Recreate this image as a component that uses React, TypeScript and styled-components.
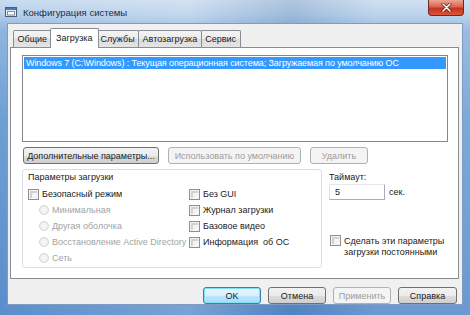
import React from "react";
import styled, { createGlobalStyle, css } from "styled-components";

const GlobalStyle = createGlobalStyle`
  html, body {
    margin: 0;
    padding: 0;
  }
  body {
    width: 470px;
    height: 315px;
    overflow: hidden;
    font-family: "Liberation Sans", Arial, sans-serif;
    font-size: 9px;
    color: #1a1a1a;
  }
`;

const Frame = styled.div`
  width: 470px;
  height: 315px;
  box-sizing: border-box;
  display: flex;
  flex-direction: column;
  background:
    linear-gradient(90deg, rgba(255, 255, 255, 0) 0%, rgba(255, 255, 255, 0.18) 40%, rgba(30, 70, 130, 0.15) 62%, rgba(255, 255, 255, 0.1) 80%),
    linear-gradient(180deg, #c9dcef 0px, #b6cfea 14px, #8fb5de 30px, #6e9fd3 120px, #5a8ecb 100%);
`;

const TitleBar = styled.div`
  height: 23px;
  display: flex;
  align-items: flex-start;
  padding-left: 5px;
  flex-shrink: 0;
`;

const Title = styled.div`
  display: flex;
  align-items: center;
  gap: 6px;
  height: 20px;
  margin-top: 2px;
  font-size: 9.5px;
  color: #1b2f4b;
`;

const CloseButton = styled.div`
  margin-left: auto;
  margin-right: 6px;
  width: 36px;
  height: 16px;
  box-sizing: border-box;
  border: 1px solid #6d2a22;
  border-top: none;
  border-radius: 0 0 4px 4px;
  background: linear-gradient(180deg, #eba595 0%, #d8654f 45%, #c5321a 55%, #d9553a 100%);
  display: flex;
  align-items: center;
  justify-content: center;
`;

const Client = styled.div`
  flex: 1;
  min-height: 0;
  margin: 0 7px 10px 7px;
  background: #f0f0f0;
  border: 1px solid #7f9bbd;
  box-sizing: border-box;
  display: flex;
  flex-direction: column;
  padding: 4px 3px 0 2px;
`;

const TabStrip = styled.div`
  display: flex;
  align-items: flex-end;
  height: 19px;
  padding-left: 4px;
  position: relative;
  z-index: 1;
  flex-shrink: 0;
`;

const Tab = styled.div<{ $active?: boolean }>`
  height: 17px;
  box-sizing: border-box;
  padding: 0 3.5px;
  margin-left: -1px;
  border: 1px solid #898c95;
  border-bottom: none;
  border-radius: 2px 2px 0 0;
  background: linear-gradient(180deg, #f4f4f4 0%, #ebebeb 50%, #dcdcdc 51%, #e4e4e4 100%);
  display: flex;
  align-items: center;
  white-space: nowrap;
  ${(p) =>
    p.$active &&
    css`
      height: 20px;
      margin: 0 -2px -1px -2px;
      padding: 0 5.5px 2px 5.5px;
      background: #fff;
      position: relative;
      z-index: 2;
    `}
`;

const Panel = styled.div`
  flex: 1;
  min-height: 0;
  border: 1px solid #898c95;
  background: #fff;
  padding: 7px 10px 10px 11px;
  display: flex;
  flex-direction: column;
`;

const ListBox = styled.div`
  height: 87px;
  flex-shrink: 0;
  box-sizing: border-box;
  border: 1px solid #828790;
  padding: 1px;
`;

const ListRow = styled.div<{ $selected?: boolean }>`
  height: 12px;
  line-height: 12px;
  padding-left: 2px;
  white-space: nowrap;
  overflow: hidden;
  letter-spacing: -0.1px;
  ${(p) =>
    p.$selected &&
    css`
      background: #3399ff;
      color: #fff;
    `}
`;

const ButtonRow = styled.div`
  display: flex;
  gap: 9px;
  margin-top: 5px;
  padding-left: 1px;
`;

const Button = styled.div<{ $w: number; $disabled?: boolean; $default?: boolean }>`
  width: ${(p) => p.$w}px;
  height: 17px;
  box-sizing: border-box;
  border: 1px solid #707070;
  border-radius: 3px;
  background: linear-gradient(180deg, #f2f2f2 0%, #ebebeb 50%, #dddddd 51%, #cfcfcf 100%);
  display: flex;
  align-items: center;
  justify-content: center;
  white-space: nowrap;
  color: #1a1a1a;
  ${(p) =>
    p.$disabled &&
    css`
      border-color: #adb2b5;
      background: #f4f4f4;
      color: #9d9d9d;
    `}
  ${(p) =>
    p.$default &&
    css`
      border-color: #3c7fb1;
      box-shadow: inset 0 0 0 1px #7fe0f8;
      background: linear-gradient(180deg, #eaf6fd 0%, #d9f0fc 50%, #bee6fd 51%, #a7d9f5 100%);
    `}
`;

const Lower = styled.div`
  display: flex;
  margin-top: 5px;
`;

const GroupBox = styled.div`
  width: 300px;
  height: 99px;
  flex-shrink: 0;
  box-sizing: border-box;
  border: 1px solid #d5dfe5;
  border-radius: 3px;
  padding: 0 5px;
`;

const GroupLabel = styled.div`
  height: 15px;
  line-height: 15px;
`;

const OptionsGrid = styled.div`
  display: grid;
  grid-template-columns: 161px 1fr;
  grid-template-rows: repeat(5, 16px);
  grid-auto-flow: column;
  margin-top: 1px;
`;

const Option = styled.div<{ $indent?: boolean; $disabled?: boolean }>`
  display: flex;
  align-items: center;
  gap: 3px;
  white-space: nowrap;
  padding-left: ${(p) => (p.$indent ? 11 : 0)}px;
  color: ${(p) => (p.$disabled ? "#a3a3a3" : "#1a1a1a")};
`;

const CheckBox = styled.span`
  width: 11px;
  height: 11px;
  box-sizing: border-box;
  border: 1px solid #8e8f8f;
  background: #f4f4f4;
  box-shadow: inset 0 0 0 1px #f4f4f4, inset 1px 1px 0 2px #d2d2d2;
  flex-shrink: 0;
`;

const Radio = styled.span`
  width: 10px;
  height: 10px;
  box-sizing: border-box;
  border-radius: 50%;
  border: 1px solid #d6d6d6;
  background: radial-gradient(circle at 50% 50%, #fbfbfb 0%, #e6e6e6 100%);
  flex-shrink: 0;
`;

const SideColumn = styled.div`
  flex: 1;
  margin-left: 7px;
  display: flex;
  flex-direction: column;
`;

const SideLabel = styled.div`
  height: 14px;
  line-height: 14px;
  margin-top: 1px;
`;

const TimeoutRow = styled.div`
  display: flex;
  align-items: center;
  gap: 4px;
`;

const TextInput = styled.div`
  width: 56px;
  height: 16px;
  box-sizing: border-box;
  border: 1px solid #abadb3;
  border-top-color: #e3e9ef;
  border-left-color: #e2e3ea;
  background: #fff;
  padding-left: 5px;
  line-height: 14px;
`;

const PermanentRow = styled.div`
  display: flex;
  align-items: flex-start;
  gap: 3px;
  margin-top: 35px;
  margin-left: 1px;
`;

const PermanentText = styled.div`
  line-height: 11px;
  margin-top: 1px;
  white-space: nowrap;
  color: #1a1a1a;
`;

const Footer = styled.div`
  display: flex;
  justify-content: flex-end;
  gap: 7px;
  padding: 8px 2px 0 0;
  height: 25px;
  box-sizing: border-box;
  flex-shrink: 0;
`;

const AppIcon = () => (
  <svg width="12" height="12" viewBox="0 0 12 12">
    <rect x="0.5" y="1.5" width="11" height="9" fill="#e8eef6" stroke="#4b5d78" />
    <rect x="1" y="2" width="10" height="2" fill="#4a78b8" />
    <rect x="2.5" y="5.5" width="7" height="3.5" fill="#ffffff" stroke="#7d8ea6" />
  </svg>
);

const CloseIcon = () => (
  <svg width="11" height="9" viewBox="0 0 11 9">
    <path d="M2 1 L9 8 M9 1 L2 8" stroke="#5a1a14" strokeWidth="3" strokeLinecap="round" />
    <path d="M2 1 L9 8 M9 1 L2 8" stroke="#ffffff" strokeWidth="1.6" strokeLinecap="round" />
  </svg>
);

const tabs = ["Общие", "Загрузка", "Службы", "Автозагрузка", "Сервис"];

export default function App() {
  return (
    <>
      <GlobalStyle />
      <Frame>
        <TitleBar>
          <Title>
            <AppIcon />
            Конфигурация системы
          </Title>
          <CloseButton>
            <CloseIcon />
          </CloseButton>
        </TitleBar>
        <Client>
          <TabStrip>
            {tabs.map((t) => (
              <Tab key={t} $active={t === "Загрузка"}>
                {t}
              </Tab>
            ))}
          </TabStrip>
          <Panel>
            <ListBox>
              <ListRow $selected>
                Windows 7 (C:\Windows) : Текущая операционная система; Загружаемая по умолчанию ОС
              </ListRow>
            </ListBox>
            <ButtonRow>
              <Button $w={136}>Дополнительные параметры...</Button>
              <Button $w={133} $disabled>
                Использовать по умолчанию
              </Button>
              <Button $w={58} $disabled>
                Удалить
              </Button>
            </ButtonRow>
            <Lower>
              <GroupBox>
                <GroupLabel>Параметры загрузки</GroupLabel>
                <OptionsGrid>
                  <Option>
                    <CheckBox />
                    Безопасный режим
                  </Option>
                  <Option $indent $disabled>
                    <Radio />
                    Минимальная
                  </Option>
                  <Option $indent $disabled>
                    <Radio />
                    Другая оболочка
                  </Option>
                  <Option $indent $disabled>
                    <Radio />
                    Восстановление Active Directory
                  </Option>
                  <Option $indent $disabled>
                    <Radio />
                    Сеть
                  </Option>
                  <Option>
                    <CheckBox />
                    Без GUI
                  </Option>
                  <Option>
                    <CheckBox />
                    Журнал загрузки
                  </Option>
                  <Option>
                    <CheckBox />
                    Базовое видео
                  </Option>
                  <Option>
                    <CheckBox />
                    Информация&nbsp; об ОС
                  </Option>
                </OptionsGrid>
              </GroupBox>
              <SideColumn>
                <SideLabel>Таймаут:</SideLabel>
                <TimeoutRow>
                  <TextInput>5</TextInput>
                  сек.
                </TimeoutRow>
                <PermanentRow>
                  <CheckBox />
                  <PermanentText>
                    Сделать эти параметры
                    <br />
                    загрузки постоянными
                  </PermanentText>
                </PermanentRow>
              </SideColumn>
            </Lower>
          </Panel>
          <Footer>
            <Button $w={58} $default>
              OK
            </Button>
            <Button $w={58}>Отмена</Button>
            <Button $w={58} $disabled>
              Применить
            </Button>
            <Button $w={59}>Справка</Button>
          </Footer>
        </Client>
      </Frame>
    </>
  );
}
